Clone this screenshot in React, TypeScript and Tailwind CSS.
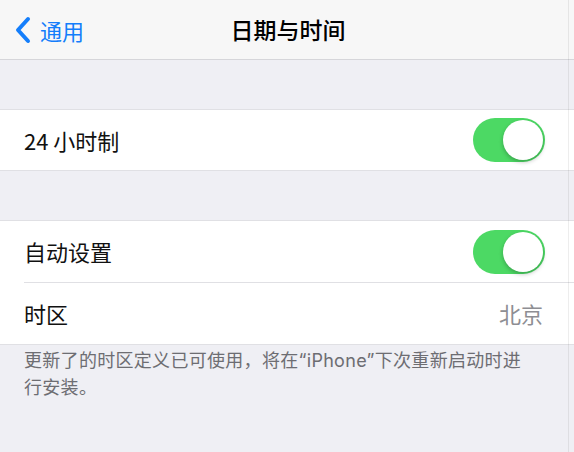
import React from "react";

const cjk = { fontFamily: '"Noto Sans CJK SC", "Noto Sans", sans-serif' };
const footerFont = { fontFamily: '"Inter", "Noto Sans CJK SC", "Noto Sans", sans-serif' };

function Toggle() {
  return (
    <div className="relative h-[44px] w-[72px] rounded-full bg-[#4cd964]">
      <div className="absolute right-[2px] top-[2px] h-[40px] w-[40px] rounded-full bg-white shadow-[0_2px_4px_rgba(0,0,0,0.25)]" />
    </div>
  );
}

export default function App() {
  return (
    <div
      className="relative flex h-[452px] w-[574px] flex-col overflow-hidden bg-[#efeff4]"
      style={cjk}
    >
      {/* Nav bar */}
      <div className="relative flex h-[60px] items-center border-b border-[#d6d6da] bg-[#f7f7f7]">
        <div className="flex items-center pl-[13px] text-[#147efb]">
          <svg width="19" height="28" viewBox="0 0 19 28" fill="none">
            <path
              d="M15 3 L5 14 L15 25"
              stroke="#147efb"
              strokeWidth="4"
              strokeLinecap="round"
              strokeLinejoin="round"
            />
          </svg>
          <span className="ml-[8px] text-[22px] leading-none">通用</span>
        </div>
        <div className="absolute inset-x-0 top-0 flex h-full items-center justify-center">
          <span className="pl-[2px] text-[23px] font-medium leading-none text-black">
            日期与时间
          </span>
        </div>
      </div>

      <div className="h-[49px]" />

      {/* Group 1 */}
      <div className="border-y border-[#e0e0e4] bg-white">
        <div className="flex h-[60px] items-center justify-between pl-[24px] pr-[29px]">
          <span className="text-[22px] text-[#111]">24 小时制</span>
          <Toggle />
        </div>
      </div>

      <div className="h-[49px]" />

      {/* Group 2 */}
      <div className="border-y border-[#e0e0e4] bg-white">
        <div className="flex h-[61px] items-center justify-between pl-[24px] pr-[29px]">
          <span className="text-[22px] text-[#111]">自动设置</span>
          <Toggle />
        </div>
        <div className="ml-[24px] h-px bg-[#e0e0e4]" />
        <div className="flex h-[61px] items-center justify-between pl-[24px] pr-[31px]">
          <span className="text-[22px] text-[#111]">时区</span>
          <span className="text-[22px] text-[#8e8e93]">北京</span>
        </div>
      </div>

      {/* Footer */}
      <div
        className="pl-[24px] pr-[36px] pt-[2px] text-[18px] leading-[27px] tracking-[0.3px] text-[#6d6d72]"
        style={footerFont}
      >
        更新了的时区定义已可使用，将在“iPhone”下次重新启动时进行安装。
      </div>

      <div className="pointer-events-none absolute left-[568px] top-0 h-full w-px bg-[#00000012]" />
    </div>
  );
}
